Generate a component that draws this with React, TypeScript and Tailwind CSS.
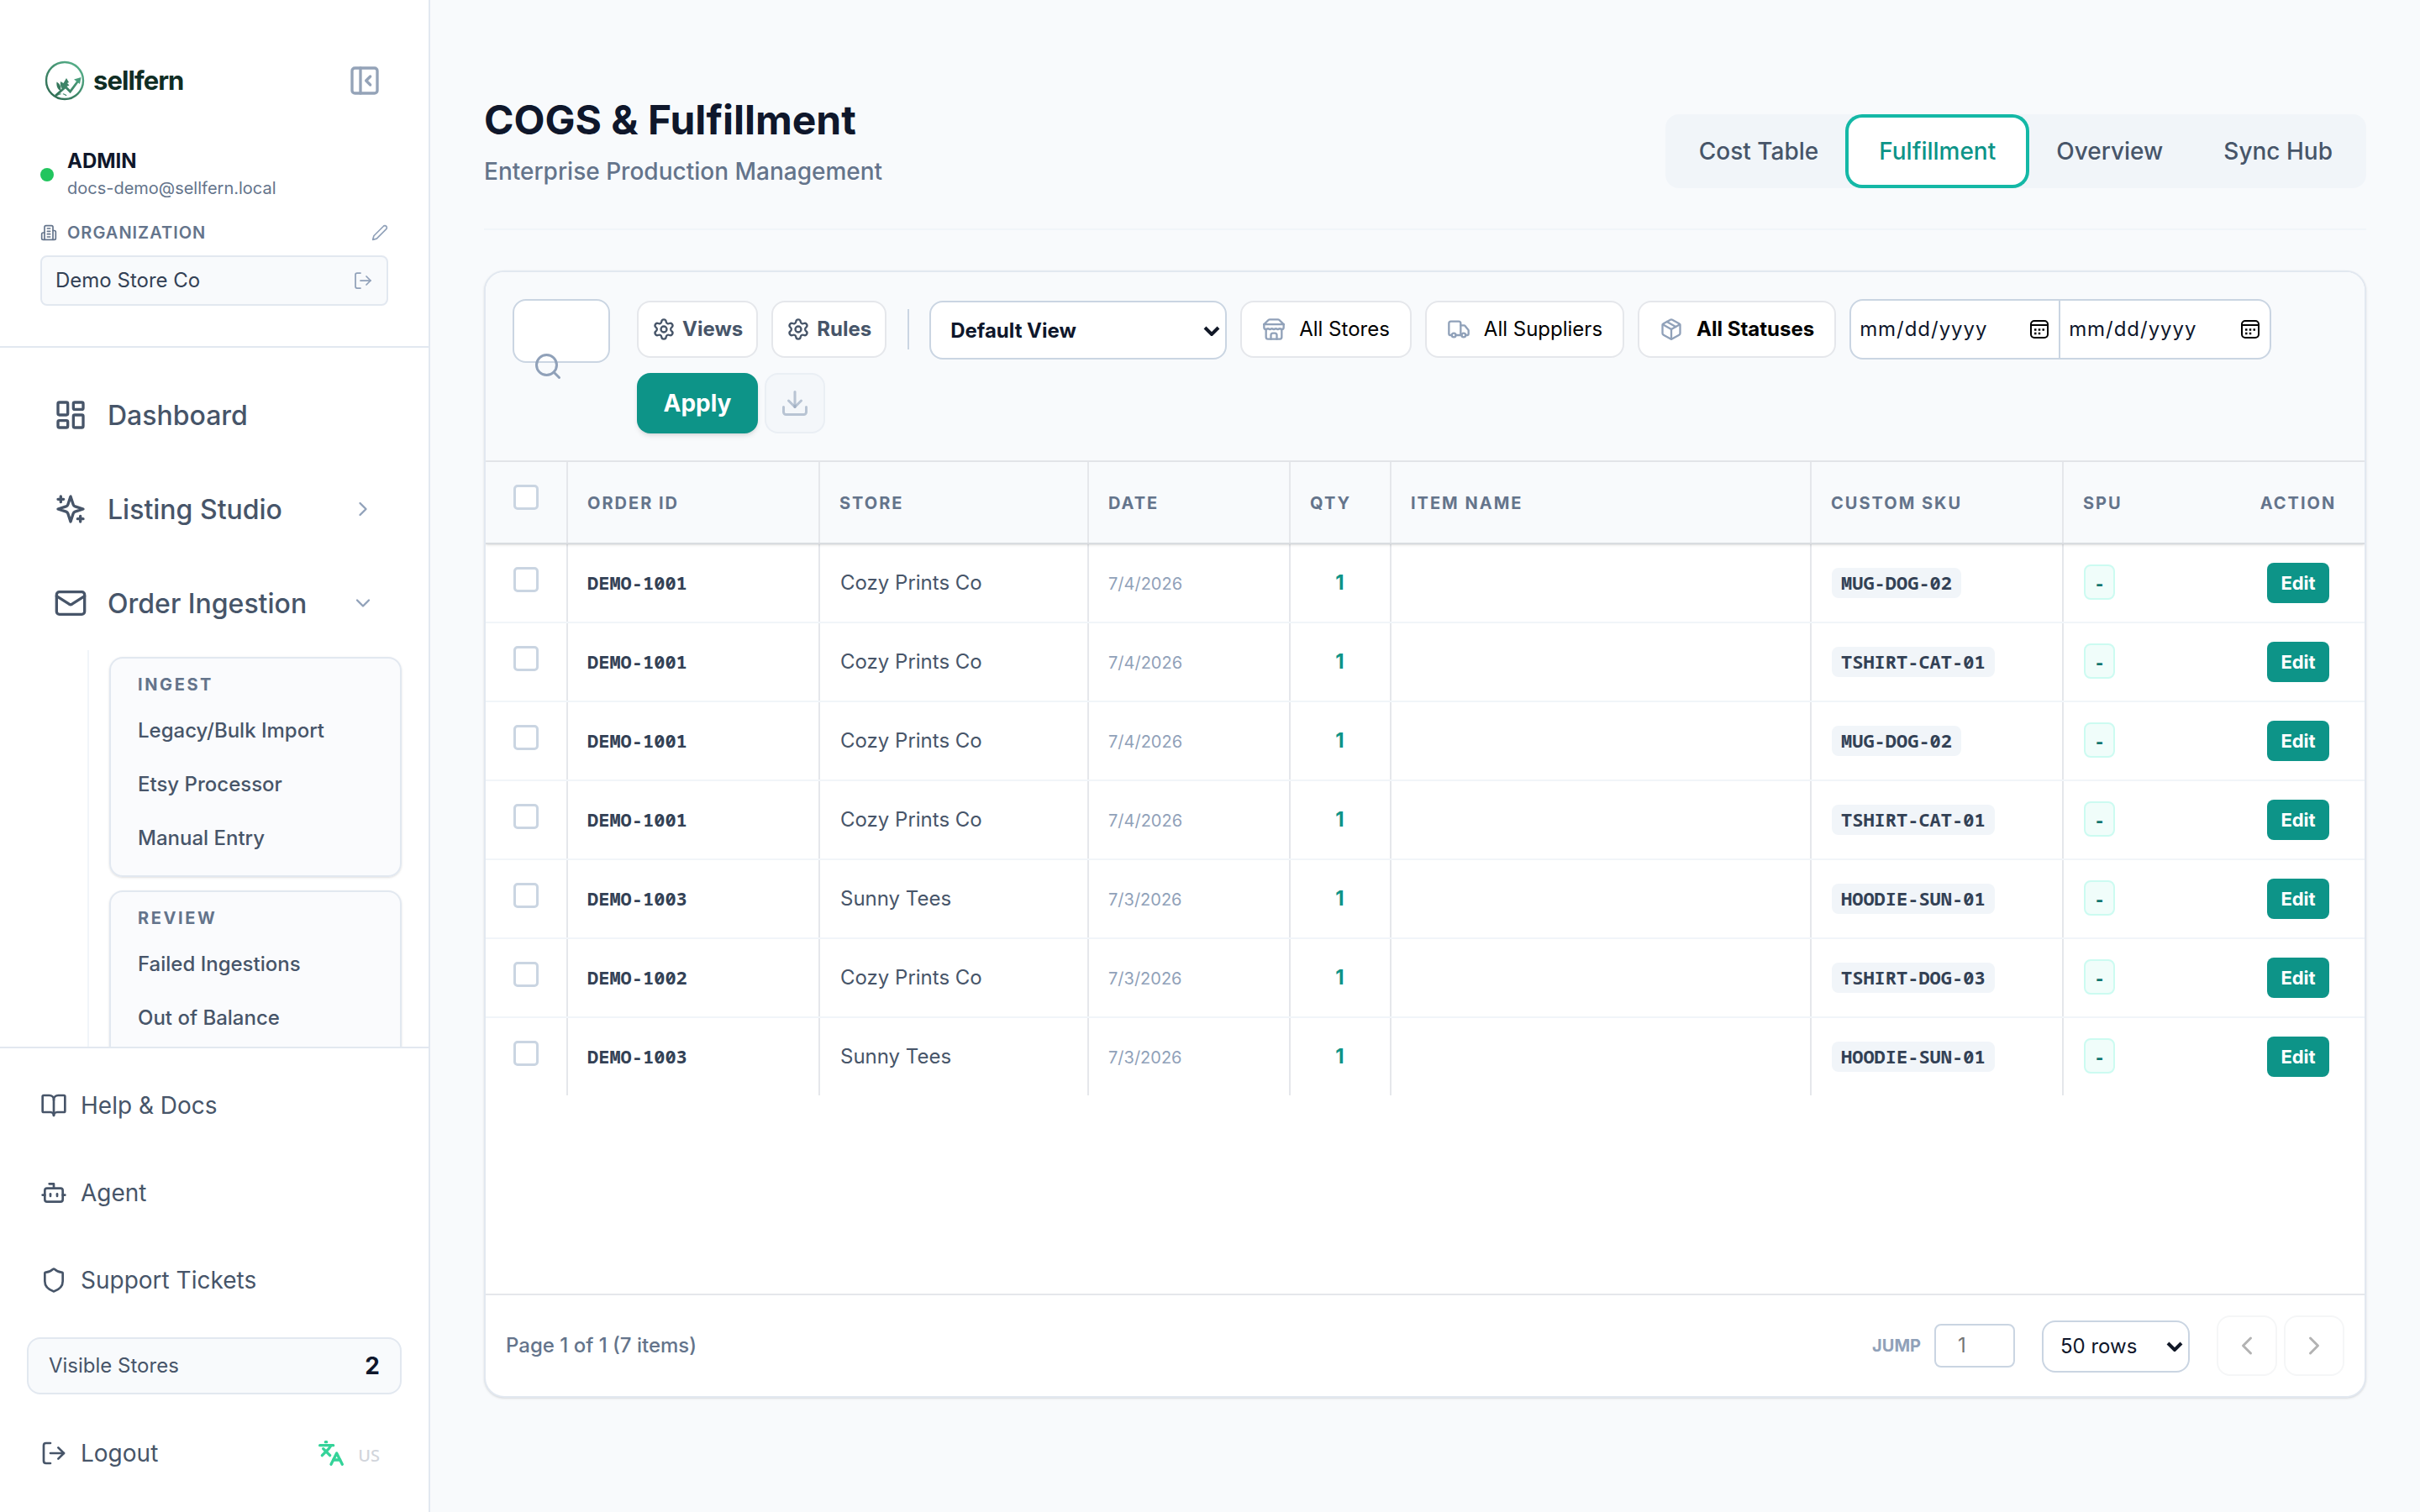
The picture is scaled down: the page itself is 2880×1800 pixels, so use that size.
import type { ReactNode } from "react";
import clsx from "clsx";
import {
  BookOpen,
  Bot,
  ChevronDown,
  ChevronLeft,
  ChevronRight,
  Download,
  Languages,
  LayoutDashboard,
  LogOut,
  Mail,
  Package,
  PanelLeftClose,
  Search,
  Settings,
  Shield,
  Truck,
} from "lucide-react";

const NAV_GROUPS = [
  { title: "INGEST", items: ["Legacy/Bulk Import", "Etsy Processor", "Manual Entry"] },
  { title: "REVIEW", items: ["Failed Ingestions", "Out of Balance"] },
];

const TABS = ["Cost Table", "Fulfillment", "Overview", "Sync Hub"];

const COLUMNS = ["ORDER ID", "STORE", "DATE", "QTY", "ITEM NAME", "CUSTOM SKU", "SPU"];

const GRID = "grid grid-cols-[98px_300px_320px_240px_120px_500px_300px_200px_1fr]";

const MONO = "font-['Noto_Sans_Mono','DejaVu_Sans_Mono',monospace]";

const ORDERS = [
  { id: "DEMO-1001", store: "Cozy Prints Co", date: "7/4/2026", qty: 1, sku: "MUG-DOG-02" },
  { id: "DEMO-1001", store: "Cozy Prints Co", date: "7/4/2026", qty: 1, sku: "TSHIRT-CAT-01" },
  { id: "DEMO-1001", store: "Cozy Prints Co", date: "7/4/2026", qty: 1, sku: "MUG-DOG-02" },
  { id: "DEMO-1001", store: "Cozy Prints Co", date: "7/4/2026", qty: 1, sku: "TSHIRT-CAT-01" },
  { id: "DEMO-1003", store: "Sunny Tees", date: "7/3/2026", qty: 1, sku: "HOODIE-SUN-01" },
  { id: "DEMO-1002", store: "Cozy Prints Co", date: "7/3/2026", qty: 1, sku: "TSHIRT-DOG-03" },
  { id: "DEMO-1003", store: "Sunny Tees", date: "7/3/2026", qty: 1, sku: "HOODIE-SUN-01" },
];

function Logo() {
  return (
    <svg width="48" height="48" viewBox="0 0 48 48" fill="none">
      <defs>
        <linearGradient id="ring" x1="8" y1="44" x2="40" y2="4" gradientUnits="userSpaceOnUse">
          <stop stopColor="#2f6b52" />
          <stop offset="1" stopColor="#56b08a" />
        </linearGradient>
      </defs>
      <circle cx="24" cy="24" r="22" stroke="url(#ring)" strokeWidth="2.4" />
      <path d="m13 42 12-10.500 5.500 5.500L41 23" stroke="url(#ring)" strokeWidth="2.800" />
      <path d="m35 22.500 8.500-2.500-1.500 8Z" fill="#4a9e7c" />
      <path d="M14.500 25.500c4 2.500 5.500 6 4.500 10.500-4-2-5-6-4.500-10.500Z" fill="#35785c" />
      <path d="m19 25 3.500 2L26 21l3 5-2 1 2.500 2.500-8.500 4c-2-1.500-2.500-5-2-8.500Z" fill="#3f8468" />
      <path d="M15 41.500c4-2.500 7-2 9-1l4 2.500" stroke="#3f8468" strokeWidth="1.200" strokeDasharray="5 2" />
    </svg>
  );
}

function Glyph({ size, children }: { size: number; children: ReactNode }) {
  return (
    <svg
      width={size}
      height={size}
      viewBox="0 0 24 24"
      fill="none"
      stroke="currentColor"
      strokeWidth="2"
      strokeLinecap="round"
      strokeLinejoin="round"
    >
      {children}
    </svg>
  );
}

function BuildingIcon() {
  return (
    <Glyph size={20}>
      <path d="M6 22V4a2 2 0 0 1 2-2h8a2 2 0 0 1 2 2v18Z" />
      <path d="M6 12H4a2 2 0 0 0-2 2v6a2 2 0 0 0 2 2h2" />
      <path d="M18 9h2a2 2 0 0 1 2 2v9a2 2 0 0 1-2 2h-2" />
      <path d="M10 6h4M10 10h4M10 14h4M10 18h4" />
    </Glyph>
  );
}

function PencilIcon() {
  return (
    <Glyph size={20}>
      <path d="M17 3a2.850 2.830 0 1 1 4 4L7.500 20.500 2 22l1.500-5.500Z" />
    </Glyph>
  );
}

function SparklesIcon() {
  return (
    <Glyph size={40}>
      <path d="m12 3-1.912 5.813a2 2 0 0 1-1.275 1.275L3 12l5.813 1.912a2 2 0 0 1 1.275 1.275L12 21l1.912-5.813a2 2 0 0 1 1.275-1.275L21 12l-5.813-1.912a2 2 0 0 1-1.275-1.275L12 3Z" />
      <path d="M5 3v4M19 17v4M3 5h4M17 19h4" />
    </Glyph>
  );
}

function StoreIcon() {
  return (
    <Glyph size={28}>
      <path d="m2 7 4.410-4.410A2 2 0 0 1 7.830 2h8.340a2 2 0 0 1 1.420.590L22 7" />
      <path d="M4 12v8a2 2 0 0 0 2 2h12a2 2 0 0 0 2-2v-8" />
      <path d="M15 22v-4a2 2 0 0 0-2-2h-2a2 2 0 0 0-2 2v4" />
      <path d="M2 7h20" />
      <path d="M22 7v3a2 2 0 0 1-2 2a2.700 2.700 0 0 1-1.590-.630.700.700 0 0 0-.820 0A2.700 2.700 0 0 1 16 12a2.700 2.700 0 0 1-1.590-.630.700.700 0 0 0-.820 0A2.700 2.700 0 0 1 12 12a2.700 2.700 0 0 1-1.590-.630.700.700 0 0 0-.820 0A2.700 2.700 0 0 1 8 12a2.700 2.700 0 0 1-1.590-.630.700.700 0 0 0-.820 0A2.700 2.700 0 0 1 4 12a2 2 0 0 1-2-2V7" />
    </Glyph>
  );
}

function SelectArrow() {
  return (
    <svg width="20" height="12" viewBox="0 0 20 12" fill="none" stroke="#111827" strokeWidth="4">
      <path d="m2 2 8 8 8-8" />
    </svg>
  );
}

function CalendarIcon() {
  return (
    <svg width="24" height="24" viewBox="0 0 24 24" fill="none" stroke="#000" strokeWidth="2">
      <rect x="2" y="2" width="20" height="20" rx="4" />
      <path d="M2 7h20" />
      <path d="M6 12.500h2.500m2.250 0h2.500m2.250 0H18M6 17h2.500m2.250 0h2.500" strokeWidth="2.500" />
    </svg>
  );
}

function NavItem({ icon, label, trailing }: { icon: ReactNode; label: string; trailing?: ReactNode }) {
  return (
    <div className="flex h-28 items-center px-8">
      {icon}
      <span className="ml-6 pt-0.5 text-[32px] leading-none font-medium">{label}</span>
      <span className="ml-auto text-slate-400">{trailing}</span>
    </div>
  );
}

function FooterItem({ icon, label }: { icon: ReactNode; label: string }) {
  return (
    <div className="flex h-[104px] items-center gap-4 px-4 text-[28px]">
      {icon}
      {label}
    </div>
  );
}

function Sidebar() {
  return (
    <aside className="flex h-full w-[512px] shrink-0 flex-col border-r-2 border-slate-200 bg-white text-[#475569]">
      <div className="h-[414px] shrink-0 border-b-2 border-slate-200 px-12 pt-[72px]">
        <div className="flex h-12 items-center pr-2 pl-[5px]">
          <Logo />
          <span className="ml-[10px] pb-0.5 text-[31px] leading-none font-bold tracking-[-0.03em] text-[#0f2d24]">
            sellfern
          </span>
          <PanelLeftClose size={40} className="ml-auto text-[#94a3b8]" />
        </div>

        <div className="mt-[55px] flex items-center">
          <span className="mt-[2px] size-4 rounded-full bg-[#22c55e]" />
          <div className="ml-4">
            <div className="text-2xl leading-[34px] font-bold text-slate-900">ADMIN</div>
            <div className="text-[20px] leading-[30px] text-[#64748b]">docs-demo@sellfern.local</div>
          </div>
        </div>

        <div className="mt-[22px] flex h-[32px] items-center text-[#64748b]">
          <BuildingIcon />
          <span className="ml-3 text-[20px] font-semibold tracking-[0.05em]">ORGANIZATION</span>
          <span className="ml-auto text-slate-400">
            <PencilIcon />
          </span>
        </div>
        <div className="mt-[11px] flex h-[60px] items-center rounded-lg border-2 border-slate-200 bg-slate-50 px-4">
          <span className="text-2xl text-[#334155]">Demo Store Co</span>
          <LogOut size={24} strokeWidth={1.75} className="ml-auto text-slate-400" />
        </div>
      </div>

      <div className="h-[832px] shrink-0 overflow-hidden px-8 pt-6">
        <NavItem icon={<LayoutDashboard size={40} />} label="Dashboard" />
        <NavItem icon={<SparklesIcon />} label="Listing Studio" trailing={<ChevronRight size={28} />} />
        <NavItem
          icon={<Mail size={40} />}
          label="Order Ingestion"
          trailing={<ChevronDown size={28} />}
        />
        <div className="ml-[72px] flex flex-col gap-4 border-l-2 border-slate-100 pt-2 pl-6">
          {NAV_GROUPS.map((group) => (
            <div
              key={group.title}
              className="h-[262px] rounded-2xl border-2 border-slate-200 bg-slate-50/70 px-8 pt-[17px] shadow-sm"
            >
              <div className="flex h-7 items-center text-[20px] font-bold tracking-[0.13em] text-[#64748b]">
                {group.title}
              </div>
              <div className="pt-[9px]">
                {group.items.map((item) => (
                  <div key={item} className="flex h-16 items-center text-2xl font-medium">
                    {item}
                  </div>
                ))}
              </div>
            </div>
          ))}
        </div>
      </div>

      <div className="flex-1 border-t-2 border-slate-200 px-8 pt-4">
        <FooterItem icon={<BookOpen size={32} />} label="Help & Docs" />
        <FooterItem icon={<Bot size={32} />} label="Agent" />
        <FooterItem icon={<Shield size={32} />} label="Support Tickets" />
        <div className="mt-4 flex h-[68px] items-center justify-between rounded-2xl border-2 border-slate-200 bg-slate-50 px-6">
          <span className="text-2xl">Visible Stores</span>
          <span className="text-[28px] font-bold text-slate-900">2</span>
        </div>
        <div className="mt-[18px] flex items-center justify-between pr-[26px]">
          <FooterItem icon={<LogOut size={32} />} label="Logout" />
          <div className="flex items-center gap-4">
            <Languages size={32} strokeWidth={2.5} className="text-[#34d399]" />
            <span className="pt-[5px] font-['Noto_Sans',sans-serif] text-[20px] font-medium text-[#d1d5db]">US</span>
          </div>
        </div>
      </div>
    </aside>
  );
}

function PageHeader() {
  return (
    <header className="flex h-[274px] items-start justify-between border-b-2 border-slate-100">
      <div className="pt-[111px]">
        <h1 className="text-[48px] leading-[64px] font-bold text-slate-900">COGS &amp; Fulfillment</h1>
        <p className="mt-[7px] text-[28px] leading-[44px] font-medium text-[#64748b]">
          Enterprise Production Management
        </p>
      </div>
      <nav className="mt-[136px] flex rounded-2xl bg-slate-100 p-1 text-[28px] font-medium text-[#475569]">
        {TABS.map((tab) => (
          <button
            key={tab}
            className={clsx(
              "h-20 px-9",
              tab === "Fulfillment" && "rounded-2xl bg-white text-[#0d9488] ring-4 ring-[#14b8a6]"
            )}
          >
            {tab}
          </button>
        ))}
      </nav>
    </header>
  );
}

function FilterButton({ icon, label, bold }: { icon: ReactNode; label: string; bold?: boolean }) {
  return (
    <button className="flex h-[68px] items-center rounded-2xl border-2 border-gray-200 bg-white px-6 text-2xl text-black">
      <span className="text-slate-400">{icon}</span>
      <span className={clsx("ml-4", bold && "font-bold")}>{label}</span>
    </button>
  );
}

function DateInput({ className }: { className?: string }) {
  return (
    <div className={clsx("flex h-[68px] w-[249px] items-center justify-between pr-[11px] pl-[10px]", className)}>
      <span className="text-2xl tracking-[0.04em] text-slate-900">mm/dd/yyyy</span>
      <CalendarIcon />
    </div>
  );
}

function Toolbar() {
  return (
    <div className="flex h-[226px] items-start border-b-2 border-gray-200 bg-slate-50 pt-8 pl-8">
      <div className="relative h-[76px] w-[116px] rounded-2xl border-2 border-slate-300 bg-white">
        <Search size={36} className="absolute top-[60px] left-[22px] text-slate-400" />
      </div>
      <div className="ml-8 flex flex-col gap-4">
        <div className="flex h-[72px] items-center gap-4">
          {["Views", "Rules"].map((label) => (
            <button
              key={label}
              className="flex h-[68px] items-center gap-2 rounded-2xl border-2 border-gray-200 bg-white px-4 text-2xl font-bold text-[#475569]"
            >
              <Settings size={28} />
              {label}
            </button>
          ))}
          <div className="mr-2 ml-[9px] h-12 w-0.5 bg-slate-300" />
          <div className="mt-0.5 flex h-[70px] w-[354px] items-center justify-between rounded-2xl border-2 border-slate-300 bg-white pt-px pr-[6px] pl-[23px] text-2xl font-bold text-slate-900">
            Default View
            <SelectArrow />
          </div>
          <FilterButton icon={<StoreIcon />} label="All Stores" />
          <FilterButton icon={<Truck size={28} />} label="All Suppliers" />
          <FilterButton icon={<Package size={28} />} label="All Statuses" bold />
          <div className="flex h-[72px] overflow-hidden rounded-2xl border-2 border-slate-300 bg-white">
            <DateInput className="border-r-2 border-slate-300" />
            <DateInput />
          </div>
        </div>
        <div className="flex gap-2">
          <button className="h-[72px] w-36 rounded-2xl bg-[#0d9488] text-[28px] font-bold text-white shadow-md">
            Apply
          </button>
          <button className="flex size-[72px] items-center justify-center rounded-2xl border-2 border-slate-200/60 bg-slate-100/60 text-slate-400/60">
            <Download size={36} />
          </button>
        </div>
      </div>
    </div>
  );
}

function Checkbox() {
  return <span className="mb-2 block size-[30px] rounded-[5px] border-3 border-slate-300 bg-white" />;
}

function OrdersTable() {
  const cell = "flex items-center border-r-2 border-gray-200 pr-6 pl-[23px]";

  return (
    <div className="flex-1">
      <div
        className={clsx(
          GRID,
          "relative h-[98px] border-b-2 border-[#d9dce0] bg-slate-50 text-[20px] font-bold tracking-[0.1em] text-[#64748b] shadow-sm"
        )}
      >
        <div className="flex items-center justify-center border-r-2 border-gray-200 pb-1">
          <Checkbox />
        </div>
        {COLUMNS.map((name) => (
          <div key={name} className={clsx("pt-0.5", name === "SPU" ? "flex items-center pl-[23px]" : cell)}>
            {name}
          </div>
        ))}
        <div className="flex items-center justify-center pt-0.5">ACTION</div>
      </div>

      {ORDERS.map((order, i) => (
        <div
          key={i}
          className={clsx(
            GRID,
            "text-[#475569]",
            i < ORDERS.length - 1 ? "h-[94px] border-b-2 border-slate-100" : "h-[92px]"
          )}
        >
          <div className="flex items-center justify-center border-r-2 border-gray-200">
            <Checkbox />
          </div>
          <div className={clsx(cell, MONO, "pb-px text-[22px] font-bold text-[#334155]")}>{order.id}</div>
          <div className={clsx(cell, "text-2xl")}>
            <span className="ml-px">{order.store}</span>
          </div>
          <div className={clsx(cell, "pt-px text-[20px] text-slate-400")}>{order.date}</div>
          <div className={clsx(cell, "justify-center text-2xl font-bold text-[#0d9488]")}>{order.qty}</div>
          <div className={cell} />
          <div className="flex items-center border-r-2 border-gray-200 px-6">
            <span
              className={clsx(
                MONO,
                "flex h-9 items-center rounded-lg bg-slate-100 px-[11px] pb-px text-[22px] font-bold text-[#334155]"
              )}
            >
              {order.sku}
            </span>
          </div>
          <div className="flex items-center px-6 pb-0.5">
            <span
              className={clsx(
                MONO,
                "flex h-[42px] items-center rounded-lg border-2 border-[#ccfbf1] bg-[#f0fdfa] px-[10px] text-[22px] font-bold text-[#0f766e]"
              )}
            >
              -
            </span>
          </div>
          <div className="flex items-center justify-center">
            <button className="h-12 rounded-lg bg-[#0d9488] px-4 text-[22px] font-bold text-white">Edit</button>
          </div>
        </div>
      ))}
    </div>
  );
}

function Pagination() {
  return (
    <div className="flex h-[122px] items-center border-t-2 border-gray-200 px-6 text-2xl">
      <span className="font-medium text-[#64748b]">Page 1 of 1 (7 items)</span>
      <span className="ml-auto text-[20px] font-bold text-slate-400">JUMP</span>
      <div className="ml-4 flex h-[52px] w-24 items-center rounded-lg border-2 border-slate-300 pl-[26px] text-[#757575]">
        1
      </div>
      <div className="mt-0.5 ml-8 flex h-[62px] w-44 items-center justify-between rounded-2xl border-2 border-slate-300 pr-[6px] pl-5 text-slate-900">
        50 rows
        <SelectArrow />
      </div>
      <div className="ml-8 flex gap-2 text-[#b3b3b3]">
        <button className="flex size-[72px] items-center justify-center rounded-2xl border-2 border-[#f5f6f7]">
          <ChevronLeft size={36} />
        </button>
        <button className="flex size-[72px] items-center justify-center rounded-2xl border-2 border-[#f5f6f7]">
          <ChevronRight size={36} />
        </button>
      </div>
    </div>
  );
}

export default function App() {
  return (
    <div className="flex h-[1800px] w-[2880px] overflow-hidden bg-slate-50 font-['Inter',sans-serif]">
      <Sidebar />
      <main className="flex-1 px-16">
        <PageHeader />
        <section className="mt-12 flex h-[1342px] flex-col overflow-hidden rounded-3xl border-2 border-slate-200 bg-white shadow-sm">
          <Toolbar />
          <OrdersTable />
          <Pagination />
        </section>
      </main>
    </div>
  );
}
